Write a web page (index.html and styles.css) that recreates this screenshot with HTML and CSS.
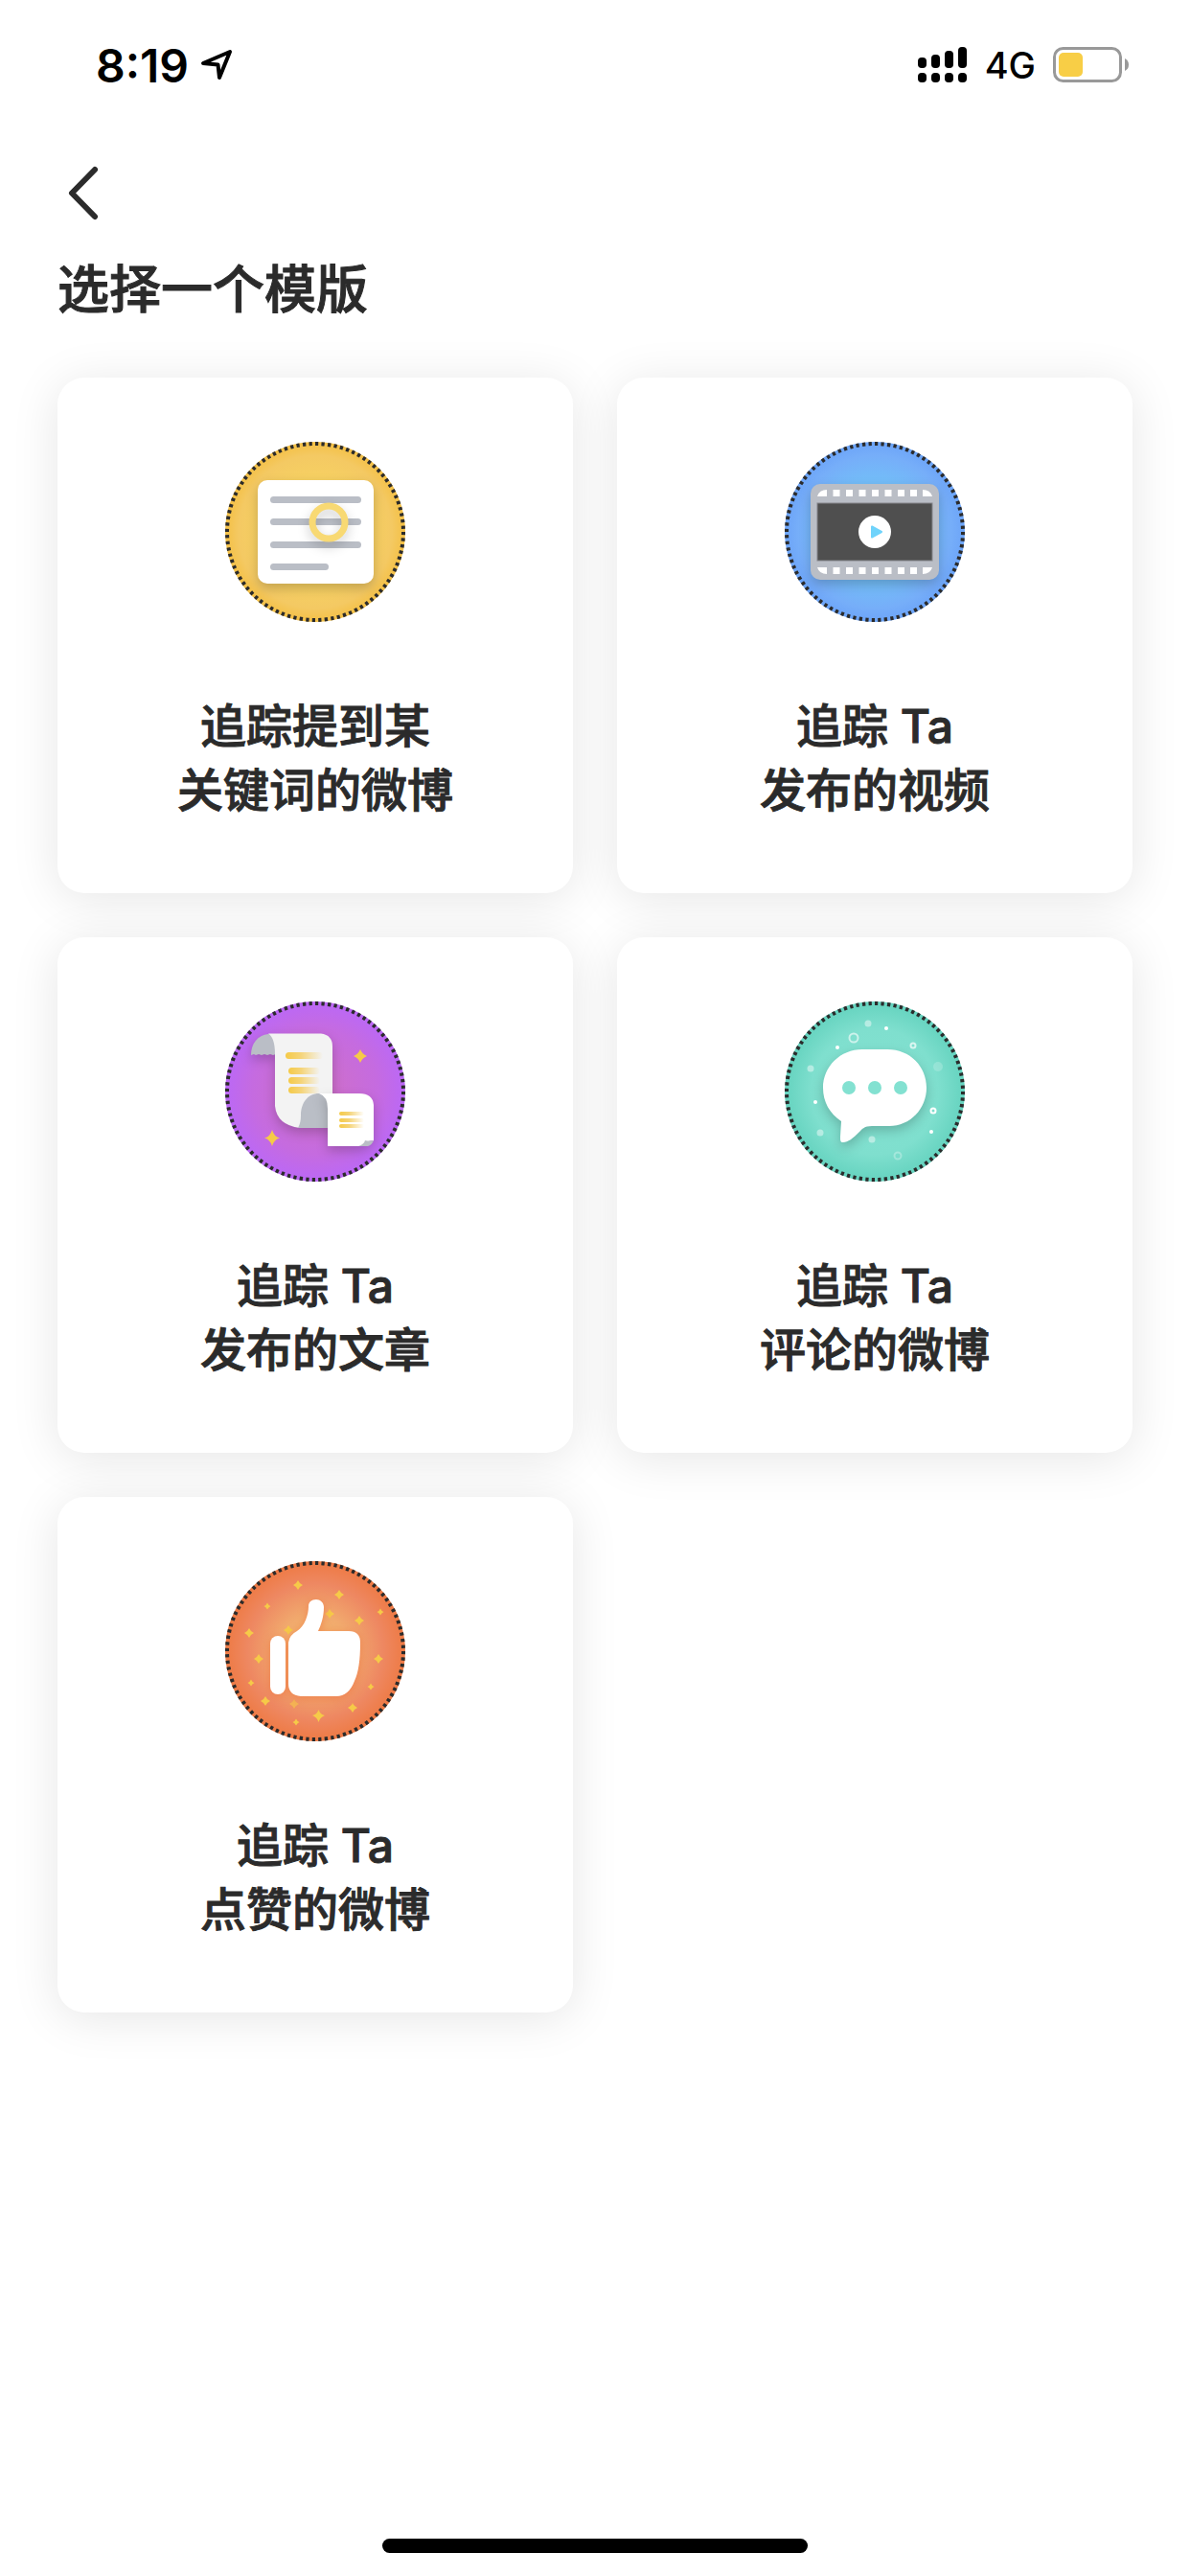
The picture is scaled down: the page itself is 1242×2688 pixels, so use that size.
FILE: index.html
```html
<!DOCTYPE html>
<html lang="zh-CN">
  <head>
    <meta charset="UTF-8" />
    <meta name="viewport" content="width=device-width, initial-scale=1.0" />
    <title>选择一个模版</title>
    <link rel="stylesheet" href="styles.css">
  </head>
  <body>
    <div class="status-bar">
      <div class="status-left">
        <span class="time">8:19</span>
        <svg class="location" width="36" height="36" viewBox="0 0 36 36">
          <path d="M3 16 L31 4 L20 31 L18.500 17.500 Z" fill="none" stroke="#000" stroke-width="4" stroke-linejoin="round" />
        </svg>
      </div>
      <div class="status-right">
        <svg class="signal" width="52" height="38" viewBox="0 0 52 38">
          <rect x="0" y="11" width="9" height="11" rx="4" />
          <rect x="14" y="8" width="9" height="14" rx="4" />
          <rect x="28" y="4" width="9" height="18" rx="4" />
          <rect x="42" y="0" width="9" height="22" rx="4" />
          <rect x="0" y="27" width="9" height="10" rx="4" />
          <rect x="14" y="27" width="9" height="10" rx="4" />
          <rect x="28" y="27" width="9" height="10" rx="4" />
          <rect x="42" y="27" width="9" height="10" rx="4" />
        </svg>
        <span class="network">4G</span>
        <svg class="battery" width="80" height="38" viewBox="0 0 80 38">
          <rect x="1.500" y="1.500" width="69" height="34" rx="9" fill="none" stroke="#999" stroke-width="3" />
          <rect x="6" y="6" width="25" height="25" rx="5" fill="#f8ce46" />
          <path d="M75 12 Q79 14 79 18.500 Q79 23 75 25 Z" fill="#999" />
        </svg>
      </div>
    </div>

    <header class="header">
      <button class="back" aria-label="返回">
        <svg width="34" height="58" viewBox="0 0 34 58">
          <path d="M29 5 L5 29.500 L29 54" fill="none" stroke="#2b2b2b" stroke-width="6" stroke-linecap="round" stroke-linejoin="round" />
        </svg>
      </button>
      <h1>选择一个模版</h1>
    </header>

    <main class="templates">
      <button class="card">
        <svg class="icon" viewBox="0 0 188 188">
          <defs>
            <radialGradient id="yellow">
              <stop offset="0" stop-color="#f9e070" />
              <stop offset="0.600" stop-color="#f6d062" />
              <stop offset="0.850" stop-color="#f4c963" />
              <stop offset="1" stop-color="#f4c045" />
            </radialGradient>
          </defs>
          <circle cx="94" cy="94" r="94" fill="url(#yellow)" />
          <circle class="dots" cx="94" cy="94" r="92" pathLength="176" />
          <rect class="shadow" x="34" y="40" width="121" height="108" rx="10" fill="#fff" />
          <g fill="#babec6">
            <rect x="47" y="57" width="95" height="7" rx="3.500" />
            <rect x="47" y="80" width="95" height="7" rx="3.500" />
            <rect x="47" y="104" width="95" height="7" rx="3.500" />
            <rect x="47" y="127" width="61" height="7" rx="3.500" />
          </g>
          <circle class="shadow" cx="108" cy="84" r="17" fill="none" stroke="#f8d973" stroke-width="7" />
        </svg>
        <span class="label">追踪提到某<br>关键词的微博</span>
      </button>

      <button class="card">
        <svg class="icon" viewBox="0 0 188 188">
          <defs>
            <radialGradient id="blue">
              <stop offset="0" stop-color="#70cdf8" />
              <stop offset="0.600" stop-color="#73bbf8" />
              <stop offset="0.850" stop-color="#76aef9" />
              <stop offset="1" stop-color="#6ca4f8" />
            </radialGradient>
          </defs>
          <circle cx="94" cy="94" r="94" fill="url(#blue)" />
          <circle class="dots" cx="94" cy="94" r="92" pathLength="176" />
          <rect class="shadow" x="27" y="44" width="134" height="100" rx="10" fill="#babec6" />
          <g fill="#fff">
            <path d="M34 57 Q36 50 44 50 V57 Z M154 57 Q152 50 144 50 V57 Z" />
            <path d="M34 131 Q36 138 44 138 V131 Z M154 131 Q152 138 144 138 V131 Z" />
            <path d="M50.500 50h7v7h-7z M64 50h7v7h-7z M77.500 50h7v7h-7z M91 50h7v7h-7z M104.500 50h7v7h-7z M118 50h7v7h-7z M131 50h7v7h-7z" />
            <path d="M50.500 131h7v7h-7z M64 131h7v7h-7z M77.500 131h7v7h-7z M91 131h7v7h-7z M104.500 131h7v7h-7z M118 131h7v7h-7z M131 131h7v7h-7z" />
          </g>
          <rect x="34" y="64" width="120" height="60" fill="#4f4f4f" stroke="#85868b" />
          <circle cx="94" cy="94" r="17" fill="#fff" />
          <path d="M91 88.500 L101 94 L91 99.500 Z" fill="#6fd3fb" stroke="#6fd3fb" stroke-width="2" stroke-linejoin="round" />
        </svg>
        <span class="label">追踪 Ta<br>发布的视频</span>
      </button>

      <button class="card">
        <svg class="icon" viewBox="0 0 188 188">
          <defs>
            <radialGradient id="purple">
              <stop offset="0" stop-color="#d070c4" />
              <stop offset="0.700" stop-color="#c56be0" />
              <stop offset="1" stop-color="#bb68f6" />
            </radialGradient>
            <linearGradient id="line">
              <stop offset="0" stop-color="#f5ca48" />
              <stop offset="0.400" stop-color="#f5d478" />
              <stop offset="1" stop-color="#f5d478" stop-opacity="0" />
            </linearGradient>
          </defs>
          <circle cx="94" cy="94" r="94" fill="url(#purple)" />
          <circle class="dots" cx="94" cy="94" r="92" pathLength="176" />
          <g class="shadow">
            <path d="M45 34 C34 35 27 44 27 56 l3-1 2 1 3-1 3 1 3-1 3 1 3-1 3 1 3-1 V34 Z" fill="#babec6" />
            <path d="M45 33.500 H100 Q112 35 112 47 V132 H78 Q54 129 52 109 V55 Q52 38 45 33.500 Z" fill="#f3f3f3" />
            <path d="M76 132 Q79 127 79 119 C79 106 86 96 98 96 H108 V132 Z" fill="#babec6" />
          </g>
          <g class="shadow">
            <path d="M98 96 H140 Q154 96 155 108 V145 Q147 145 144 151 H107 V112 Q107 99 98 96 Z" fill="#fff" />
          </g>
          <path d="M139 151 Q145 149 146 145 Q151 146 155 145 Q153 150 149 151 Z" fill="#babec6" />
          <g fill="url(#line)">
            <rect x="63" y="53" width="39" height="7" rx="3.500" />
            <rect x="66" y="69" width="33" height="7" rx="3.500" />
            <rect x="66" y="79" width="33" height="7" rx="3.500" />
            <rect x="66" y="89" width="33" height="7" rx="3.500" />
            <rect x="119" y="115" width="26" height="4" rx="2" />
            <rect x="119" y="122" width="26" height="4" rx="2" />
            <rect x="119" y="128" width="26" height="4" rx="2" />
          </g>
          <g fill="#f6ca48">
            <path d="M141 50 Q143 55 148 57 Q143 59 141 64 Q139 59 134 57 Q139 55 141 50 Z" />
            <path d="M49 134 Q51 141 57 142.500 Q51 144 49 151 Q47 144 41 142.500 Q47 141 49 134 Z" />
          </g>
        </svg>
        <span class="label">追踪 Ta<br>发布的文章</span>
      </button>

      <button class="card">
        <svg class="icon" viewBox="0 0 188 188">
          <defs>
            <radialGradient id="green">
              <stop offset="0" stop-color="#84e2d2" />
              <stop offset="0.700" stop-color="#7fdfce" />
              <stop offset="1" stop-color="#65d3bf" />
            </radialGradient>
          </defs>
          <circle cx="94" cy="94" r="94" fill="url(#green)" />
          <circle class="dots" cx="94" cy="94" r="92" pathLength="176" />
          <path class="shadow" d="M81 50 H107 C131 50 148 68 148 90 C148 112 131 130 109 130 H91 C83 130 81 133 78 136 C71 143 66 147 61 147 C58 147 58 145 58 141 L59 125 C47 117 40 105 40 90 C40 68 58 50 81 50 Z" fill="#fff" />
          <g fill="#83e1d1">
            <circle cx="67" cy="90" r="7" />
            <circle cx="94" cy="90" r="7" />
            <circle cx="121" cy="90" r="7" />
          </g>
          <g fill="#fff">
            <circle cx="106" cy="28" r="2" />
            <circle cx="55" cy="48" r="2" />
            <circle cx="32" cy="105" r="2" />
            <circle cx="153" cy="136" r="2" />
          </g>
          <g fill="#fff" opacity="0.450">
            <circle cx="87" cy="23" r="3.500" />
            <circle cx="27" cy="70" r="3.500" />
            <circle cx="37" cy="137" r="3.500" />
            <circle cx="91" cy="144" r="3.500" />
          </g>
          <circle cx="160" cy="68" r="5" fill="#fff" opacity="0.200" />
          <g fill="none" stroke="#fff" stroke-width="2">
            <circle cx="72" cy="38" r="4.500" opacity="0.600" />
            <circle cx="134" cy="46" r="2.500" opacity="0.700" />
            <circle cx="155" cy="114" r="2.500" />
            <circle cx="118" cy="161" r="3.500" opacity="0.300" />
          </g>
        </svg>
        <span class="label">追踪 Ta<br>评论的微博</span>
      </button>

      <button class="card">
        <svg class="icon" viewBox="0 0 188 188">
          <defs>
            <radialGradient id="orange">
              <stop offset="0" stop-color="#f3b96e" />
              <stop offset="0.400" stop-color="#f1ab6e" />
              <stop offset="0.750" stop-color="#ee8862" />
              <stop offset="1" stop-color="#ee7a44" />
            </radialGradient>
            <path id="spark" d="M0 -5 Q1.500 -1.500 5 0 Q1.500 1.500 0 5 Q-1.500 1.500 -5 0 Q-1.500 -1.500 0 -5 Z" />
            <path id="spark-small" d="M0 -3.500 Q1 -1 3.500 0 Q1 1 0 3.500 Q-1 1 -3.500 0 Q-1 -1 0 -3.500 Z" />
          </defs>
          <circle cx="94" cy="94" r="94" fill="url(#orange)" />
          <circle class="dots" cx="94" cy="94" r="92" pathLength="176" />
          <g fill="#f6ca48">
            <use href="#spark" x="76" y="25" />
            <use href="#spark" x="119" y="35" />
            <use href="#spark" x="109" y="55" />
            <use href="#spark" x="140" y="62" />
            <use href="#spark" x="66" y="72" />
            <use href="#spark" x="25" y="75" />
            <use href="#spark" x="35" y="102" />
            <use href="#spark" x="160" y="102" />
            <use href="#spark" x="42" y="146" />
            <use href="#spark" x="72" y="149" opacity="0.600" />
            <use href="#spark" x="133" y="153" />
            <path d="M97.500 155 Q99 160 104 161 Q99 163 97.500 168 Q96 163 91 161 Q96 160 97.500 155 Z" />
            <use href="#spark-small" x="44" y="47" />
            <use href="#spark-small" x="162" y="53" />
            <use href="#spark-small" x="27" y="127" />
            <use href="#spark-small" x="152" y="131" />
            <use href="#spark-small" x="74" y="168" />
          </g>
          <g class="glow" fill="#fff">
            <rect x="47" y="78" width="16" height="61" rx="8" />
            <path d="M66 85 Q67 77 75 73 C83 68 87 56 87 47 C87 43 90 40 95 40 C99 40 103 43 103 48 C103 58 100 67 97 73 H129 Q141 73 141 85 C141 104 139 116 135 125 Q129 141 116 141 H79 Q66 140 66 128 Z" />
          </g>
        </svg>
        <span class="label">追踪 Ta<br>点赞的微博</span>
      </button>
    </main>

    <div class="home-indicator"></div>
  </body>
</html>
```
FILE: styles.css
```css
* {
  margin: 0;
  padding: 0;
  box-sizing: border-box;
}

body {
  display: flex;
  flex-direction: column;
  min-height: 100vh;
  background-color: #fff;
  color: #2b2b2b;
  font-family: Inter, "Noto Sans CJK SC", sans-serif;
}

button {
  border: none;
  background: none;
  color: inherit;
  font-family: inherit;
  cursor: pointer;
}

svg {
  display: block;
}

.status-bar {
  display: flex;
  justify-content: space-between;
  align-items: center;
  height: 136px;
  padding: 0 63px 0 100px;
  color: #000;
}

.status-left,
.status-right {
  display: flex;
  align-items: center;
}

.status-left {
  gap: 12px;
}

.time {
  font-size: 48px;
  font-weight: 600;
}

.signal {
  margin-right: 18px;
}

.network {
  margin-right: 18px;
  font-size: 38px;
  font-weight: 500;
}

.header {
  padding: 36px 60px 0;
}

.back {
  display: block;
  padding-left: 10px;
}

.header h1 {
  margin-top: 33px;
  font-size: 54px;
  font-weight: 500;
  line-height: 80px;
  -webkit-text-stroke: 1px #2b2b2b;
}

.templates {
  display: grid;
  grid-template-columns: repeat(2, 1fr);
  gap: 46px;
  padding: 51px 60px;
}

.card {
  display: flex;
  flex-direction: column;
  align-items: center;
  gap: 75px;
  aspect-ratio: 1;
  padding-top: 67px;
  border-radius: 28px;
  background-color: #fff;
  box-shadow: 0 6px 50px rgba(0, 0, 0, 0.1);
}

.icon {
  width: 188px;
  height: 188px;
}

.label {
  font-size: 48px;
  font-weight: 500;
  line-height: 67px;
  -webkit-text-stroke: 1px #2b2b2b;
}

.dots {
  fill: none;
  stroke: #2b2b2b;
  stroke-width: 4;
  stroke-dasharray: 1 1;
}

.shadow {
  filter: drop-shadow(0 5px 6px rgba(0, 0, 0, 0.2));
}

.glow {
  filter: drop-shadow(0 2px 5px rgba(238, 110, 60, 0.6));
}

.home-indicator {
  width: 444px;
  height: 15px;
  margin: auto auto 24px;
  border-radius: 8px;
  background-color: #000;
}
```
